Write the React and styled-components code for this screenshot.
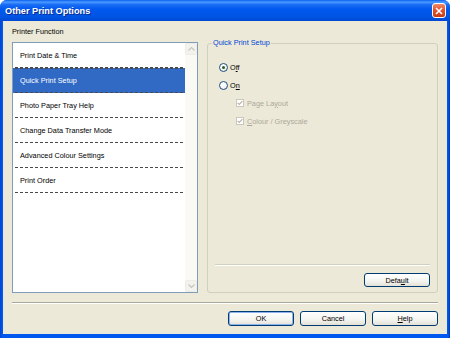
import React from 'react';
import styled, { createGlobalStyle } from 'styled-components';

const GlobalStyle = createGlobalStyle`
    html, body {
        margin: 0;
        padding: 0;
        background: #ffffff;
    }
    body {
        font-family: "Liberation Sans", Arial, sans-serif;
    }
`

const Window = styled.div`
    width: 450px;
    height: 338px;
    box-sizing: border-box;
    display: flex;
    flex-direction: column;
    background: linear-gradient(to right, #0042C8 0px, #0058EE 2px, #0058EE 448px, #0038B8 450px);
    border-radius: 7px 7px 0 0;
    overflow: hidden;
`

const TitleBar = styled.div`
    height: 21px;
    flex: none;
    display: flex;
    align-items: center;
    justify-content: space-between;
    padding: 0 4px 0 5px;
    background: linear-gradient(to bottom, #0A5FEF 0%, #4C9BFF 10%, #1A6CF5 22%, #0058EE 45%, #0054E3 80%, #0048D4 100%);
    color: #ffffff;
    font-weight: bold;
    font-size: 9.2px;
    text-shadow: 1px 1px 0 #0A2A8A;
`

const CloseButton = styled.div`
    width: 14px;
    height: 15px;
    box-sizing: border-box;
    border: 1px solid #ffffff;
    border-radius: 3px;
    background: linear-gradient(to bottom, #F08A68 0%, #E2532E 45%, #C83A14 100%);
    display: flex;
    align-items: center;
    justify-content: center;
`

const Body = styled.div`
    flex: 1;
    margin: 0 3px 4px;
    background: #ECE9D8;
    display: flex;
    flex-direction: column;
    padding: 6px 9px 8px;
    font-size: 7.3px;
    color: #000000;
`

const MainRow = styled.div`
    display: flex;
    gap: 9px;
`

const LeftColumn = styled.div`
    display: flex;
    flex-direction: column;
    gap: 5px;
`

const Label = styled.div`
    height: 10px;
    line-height: 10px;
`

const ListBox = styled.div`
    width: 186px;
    height: 251px;
    box-sizing: border-box;
    border: 1px solid #7F9DB9;
    background: #ffffff;
    display: flex;
`

const ItemList = styled.div`
    flex: 1;
    display: flex;
    flex-direction: column;
`

const dash = (color) => `linear-gradient(to right, ${color} 3px, transparent 3px)`

const ListItem = styled.div`
    height: 25px;
    flex: none;
    display: flex;
    align-items: center;
    padding-left: 7px;
    color: ${p => p.$selected ? '#ffffff' : '#000000'};
    background-color: ${p => p.$selected ? '#316AC5' : 'transparent'};
    background-image: ${p => p.$selected ? `${dash('#4A4A4A')}, ${dash('#4A4A4A')}` : dash('#4A4A4A')};
    background-size: 5px 1px;
    background-repeat: repeat-x;
    background-position: ${p => p.$selected ? '2px 0, 2px 100%' : '2px 100%'};
`

const ScrollTrack = styled.div`
    width: 12px;
    background: #FAF9F4;
    display: flex;
    flex-direction: column;
    justify-content: space-between;
`

const ScrollButton = styled.div`
    width: 12px;
    height: 12px;
    box-sizing: border-box;
    border: 1px solid #EEEDE5;
    border-radius: 2px;
    background: #F3F2EC;
    display: flex;
    align-items: center;
    justify-content: center;
`

const RightColumn = styled.div`
    padding-top: 11px;
`

const GroupBox = styled.fieldset`
    margin: 0;
    width: 231px;
    height: 255px;
    box-sizing: border-box;
    border: 1px solid #D0D0BF;
    border-radius: 3px;
    padding: 10px 7px 5px;
    display: flex;
    flex-direction: column;
    min-width: 0;
`

const GroupLegend = styled.legend`
    padding: 0 1px;
    margin-left: -3px;
    line-height: 10px;
    color: #0046D5;
`

const OptionRow = styled.div`
    height: 18px;
    display: flex;
    align-items: center;
    gap: ${p => p.$indent ? '3px' : '2px'};
    padding-left: ${p => p.$indent ? '21px' : '4px'};
    color: ${p => p.$disabled ? '#ACA899' : '#000000'};
`

const Radio = styled.span`
    width: 9px;
    height: 9px;
    box-sizing: border-box;
    border-radius: 50%;
    border: 1px solid #1C5180;
    background: radial-gradient(circle at 35% 35%, #ffffff 30%, #DCDBD3 100%);
    display: flex;
    align-items: center;
    justify-content: center;
    &::after {
        content: '';
        width: 3px;
        height: 3px;
        border-radius: 50%;
        background: ${p => p.$checked ? '#2F5A2F' : 'transparent'};
    }
`

const CheckBox = styled.span`
    width: 8px;
    height: 8px;
    box-sizing: border-box;
    border: 1px solid #CAC8BB;
    background: #ffffff;
    display: flex;
    align-items: center;
    justify-content: center;
`

const Spacer = styled.div`
    flex: 1;
`

const Separator = styled.div`
    flex: none;
    border-top: 1px solid ${p => p.$dark ? '#ACA899' : '#D0D0BF'};
    border-bottom: 1px solid #ffffff;
    margin-top: ${p => p.$top || 0}px;
`

const ButtonRow = styled.div`
    display: flex;
    justify-content: flex-end;
    gap: 6px;
    margin-top: ${p => p.$top}px;
`

const Button = styled.div`
    width: 66px;
    height: ${p => p.$h}px;
    box-sizing: border-box;
    border: 1px solid #003C74;
    border-radius: 3px;
    background: linear-gradient(to bottom, #FFFFFF 0%, #F4F4F0 60%, #E3E1D6 100%);
    box-shadow: ${p => p.$default ? 'inset 0 0 0 1px #8DB2EE' : 'none'};
    display: flex;
    align-items: center;
    justify-content: center;
`

const items = [
    'Print Date & Time',
    'Quick Print Setup',
    'Photo Paper Tray Help',
    'Change Data Transfer Mode',
    'Advanced Colour Settings',
    'Print Order',
]

const Chevron = ({ up }) => (
    <svg width="7" height="4" viewBox="0 0 7 4">
        <path d={up ? 'M0.5 3.5 L3.5 0.5 L6.5 3.5' : 'M0.5 0.5 L3.5 3.5 L6.5 0.5'} fill="none" stroke="#C9C7BC" strokeWidth="1.2" />
    </svg>
)

const Tick = () => (
    <svg width="6" height="6" viewBox="0 0 6 6">
        <path d="M0.6 2.8 L2.3 4.5 L5.4 1.2" fill="none" stroke="#B6B4A8" strokeWidth="1.2" />
    </svg>
)

export default function App() {
    return (
        <>
            <GlobalStyle />
            <Window>
                <TitleBar>
                    <span>Other Print Options</span>
                    <CloseButton>
                        <svg width="8" height="8" viewBox="0 0 8 8">
                            <path d="M1 1 L7 7 M7 1 L1 7" stroke="#ffffff" strokeWidth="1.6" />
                        </svg>
                    </CloseButton>
                </TitleBar>
                <Body>
                    <MainRow>
                        <LeftColumn>
                            <Label>Printer Function</Label>
                            <ListBox>
                                <ItemList>
                                    {items.map((item, i) => (
                                        <ListItem key={item} $selected={i === 1}>{item}</ListItem>
                                    ))}
                                </ItemList>
                                <ScrollTrack>
                                    <ScrollButton><Chevron up /></ScrollButton>
                                    <ScrollButton><Chevron /></ScrollButton>
                                </ScrollTrack>
                            </ListBox>
                        </LeftColumn>
                        <RightColumn>
                            <GroupBox>
                                <GroupLegend>Quick Print Setup</GroupLegend>
                                <OptionRow>
                                    <Radio $checked />
                                    <span>O<u>f</u>f</span>
                                </OptionRow>
                                <OptionRow>
                                    <Radio />
                                    <span>O<u>n</u></span>
                                </OptionRow>
                                <OptionRow $indent $disabled>
                                    <CheckBox><Tick /></CheckBox>
                                    <span>Page La<u>y</u>out</span>
                                </OptionRow>
                                <OptionRow $indent $disabled>
                                    <CheckBox><Tick /></CheckBox>
                                    <span><u>C</u>olour / Greyscale</span>
                                </OptionRow>
                                <Spacer />
                                <Separator />
                                <ButtonRow $top={7}>
                                    <Button $h={14}>Defa<u>u</u>lt</Button>
                                </ButtonRow>
                            </GroupBox>
                        </RightColumn>
                    </MainRow>
                    <Separator $dark $top={9} />
                    <ButtonRow $top={7}>
                        <Button $h={15} $default>OK</Button>
                        <Button $h={15}>Cancel</Button>
                        <Button $h={15}><u>H</u>elp</Button>
                    </ButtonRow>
                </Body>
            </Window>
        </>
    )
}
